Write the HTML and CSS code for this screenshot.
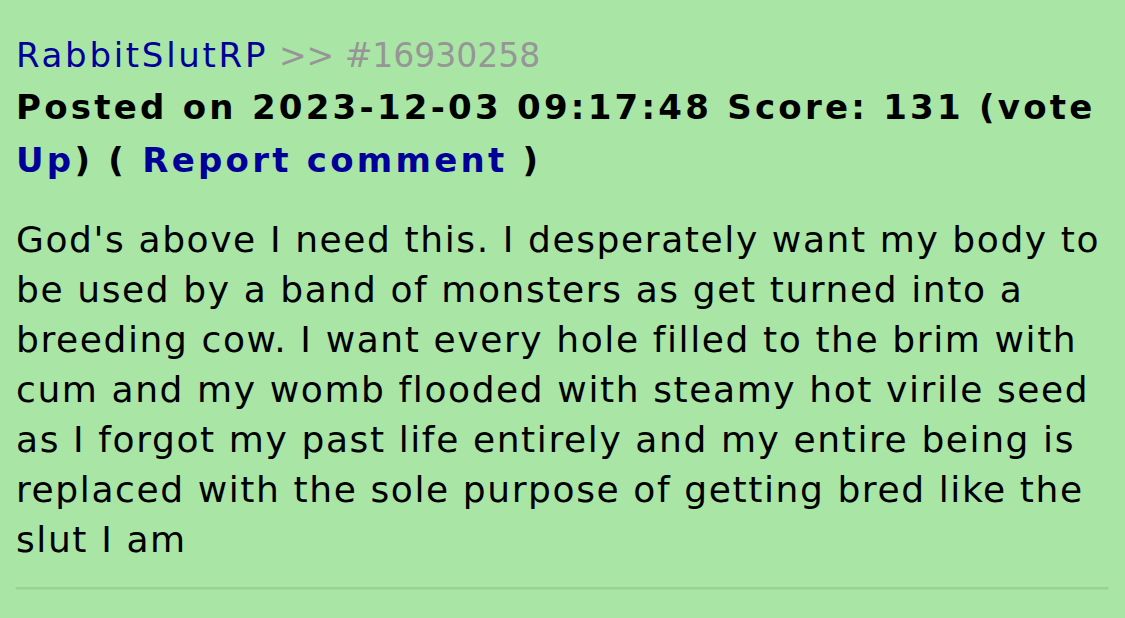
FILE: index.html
```html
<!DOCTYPE html>
<html lang="en">
<head>
  <meta charset="utf-8">
  <link rel="stylesheet" href="styles.css">
</head>
<body>
  <div class="comment">
    <div class="comment-head">
      <a class="author" href="#">RabbitSlutRP</a>
      <span class="post-id">&gt;&gt; #16930258</span>
    </div>
    <div class="comment-meta">
      Posted on 2023-12-03 09:17:48 Score: 131 (vote <a href="#">Up</a>) ( <a href="#">Report comment</a> )
    </div>
    <div class="comment-body">
      God's above I need this. I desperately want my body to be used by a band of monsters as get turned into a breeding cow. I want every hole filled to the brim with cum and my womb flooded with steamy hot virile seed as I forgot my past life entirely and my entire being is replaced with the sole purpose of getting bred like the slut I am
    </div>
    <hr class="divider">
  </div>
</body>
</html>
```

FILE: styles.css
```css
body {
    margin: 0;
    padding: 0;
    background: rgb(169, 229, 165);
    font-family: "DejaVu Sans", Verdana, sans-serif;
    color: #000;
}
a {
    color: rgb(0, 0, 153);
    text-decoration: none;
}
.comment {
    padding: 30px 10px 0 16px;
}
.comment-head {
    font-size: 34px;
    line-height: 50px;
}
.author {
    color: rgb(0, 0, 153);
    letter-spacing: 2.7px;
}
.post-id {
    color: rgb(150, 150, 150);
    font-size: 33px;
}
.comment-meta {
    font-size: 34px;
    font-weight: bold;
    line-height: 53px;
    letter-spacing: 3.25px;
}
.comment-body {
    margin-top: 28px;
    font-size: 36px;
    line-height: 50px;
    letter-spacing: 1.6px;
}
/* inset rule under each comment */
.divider {
    margin: 22px 6px 0 -1px;
    height: 1px;
    border-style: solid;
    border-width: 2px 1px 0 1px;
    border-color: rgb(154, 210, 150) rgb(175, 232, 171) rgb(175, 232, 171) rgb(175, 232, 171);
    background: rgb(160, 218, 156);
}
```
